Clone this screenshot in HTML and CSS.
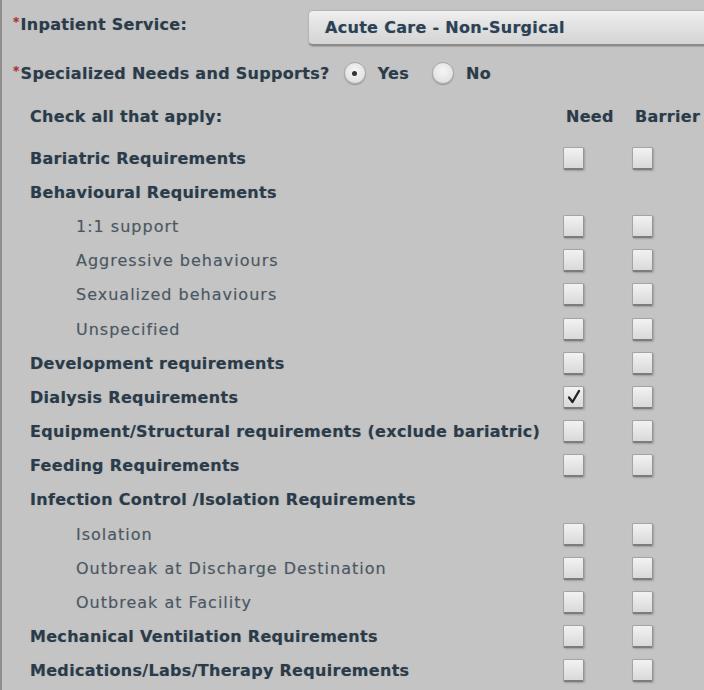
FILE: index.html
```html
<!DOCTYPE html>
<html>
<head>
<meta charset="utf-8">
<link rel="stylesheet" href="styles.css">
</head>
<body>
<div class="panel">
  <div class="field service">
    <div class="label"><span class="req">*</span>Inpatient Service:</div>
    <div class="select">Acute Care - Non-Surgical</div>
  </div>
  <div class="field needs">
    <div class="label"><span class="req">*</span>Specialized Needs and Supports?</div>
    <div class="radios">
      <span class="radio on"></span><span class="rlabel">Yes</span>
      <span class="radio"></span><span class="rlabel">No</span>
    </div>
  </div>
  <div class="grid">
    <div class="row head"><span class="name">Check all that apply:</span><span class="col">Need</span><span class="col">Barrier</span></div>
    <div class="row"><span class="name">Bariatric Requirements</span><span class="cell"><i class="cb"></i></span><span class="cell"><i class="cb"></i></span></div>
    <div class="row"><span class="name">Behavioural Requirements</span><span class="cell"></span><span class="cell"></span></div>
    <div class="row sub"><span class="name">1:1 support</span><span class="cell"><i class="cb"></i></span><span class="cell"><i class="cb"></i></span></div>
    <div class="row sub"><span class="name">Aggressive behaviours</span><span class="cell"><i class="cb"></i></span><span class="cell"><i class="cb"></i></span></div>
    <div class="row sub"><span class="name">Sexualized behaviours</span><span class="cell"><i class="cb"></i></span><span class="cell"><i class="cb"></i></span></div>
    <div class="row sub"><span class="name">Unspecified</span><span class="cell"><i class="cb"></i></span><span class="cell"><i class="cb"></i></span></div>
    <div class="row"><span class="name">Development requirements</span><span class="cell"><i class="cb"></i></span><span class="cell"><i class="cb"></i></span></div>
    <div class="row"><span class="name">Dialysis Requirements</span><span class="cell"><i class="cb checked"><svg viewBox="0 0 20 20" width="20" height="20"><path d="M5 10.5 L8.5 15 L15 4" fill="none" stroke="#222" stroke-width="2.3" stroke-linecap="round" stroke-linejoin="round"/></svg></i></span><span class="cell"><i class="cb"></i></span></div>
    <div class="row"><span class="name">Equipment/Structural requirements (exclude bariatric)</span><span class="cell"><i class="cb"></i></span><span class="cell"><i class="cb"></i></span></div>
    <div class="row"><span class="name">Feeding Requirements</span><span class="cell"><i class="cb"></i></span><span class="cell"><i class="cb"></i></span></div>
    <div class="row"><span class="name">Infection Control /Isolation Requirements</span><span class="cell"></span><span class="cell"></span></div>
    <div class="row sub"><span class="name">Isolation</span><span class="cell"><i class="cb"></i></span><span class="cell"><i class="cb"></i></span></div>
    <div class="row sub"><span class="name">Outbreak at Discharge Destination</span><span class="cell"><i class="cb"></i></span><span class="cell"><i class="cb"></i></span></div>
    <div class="row sub"><span class="name">Outbreak at Facility</span><span class="cell"><i class="cb"></i></span><span class="cell"><i class="cb"></i></span></div>
    <div class="row"><span class="name">Mechanical Ventilation Requirements</span><span class="cell"><i class="cb"></i></span><span class="cell"><i class="cb"></i></span></div>
    <div class="row"><span class="name">Medications/Labs/Therapy Requirements</span><span class="cell"><i class="cb"></i></span><span class="cell"><i class="cb"></i></span></div>
  </div>
</div>
</body>
</html>
```
FILE: styles.css
```css
html, body {
  margin: 0;
  padding: 0;
  background: #c4c4c4;
}
body {
  width: 704px;
  height: 690px;
  overflow: hidden;
  font-family: "DejaVu Sans", Verdana, sans-serif;
  font-size: 16px;
  letter-spacing: 0.3px;
  color: #2b3b4a;
  text-shadow: 0 0 1px rgba(43, 59, 74, 0.35);
}
.panel {
  border-left: 2px solid #8e8e8e;
  height: 690px;
  box-sizing: border-box;
  padding-top: 10px;
}
.field {
  display: flex;
  align-items: center;
  padding-left: 11px;
  font-weight: bold;
}
.req {
  color: #b8283a;
  font-size: 12px;
  vertical-align: 4px;
  margin-right: 1px;
}
.service {
  height: 35px;
}
.service .label {
  width: 295px;
  align-self: flex-start;
  padding-top: 5px;
}
.select {
  flex: 1;
  height: 36px;
  box-sizing: border-box;
  display: flex;
  align-items: center;
  padding-left: 16px;
  padding-top: 1px;
  color: #2b4256;
  border-radius: 5px 0 0 5px;
  background: linear-gradient(#f0f0f0 0%, #e6e6e6 30%, #d4d4d4 100%);
  border: 1px solid #b4b4b4;
  border-right: none;
  border-bottom: 2px solid #8a8a8a;
  box-shadow: 0 1px 1px rgba(0,0,0,0.15);
}
.needs {
  height: 40px;
  margin-top: 8px;
}
.needs .label {
  margin-right: 14px;
}
.radios {
  display: flex;
  align-items: center;
}
.radio {
  width: 22px;
  height: 22px;
  border-radius: 50%;
  box-sizing: border-box;
  border: 1px solid #a9a9a9;
  background: radial-gradient(circle at 50% 40%, #f6f6f6 0%, #e2e2e2 70%, #d0d0d0 100%);
  box-shadow: 0 1px 1px rgba(0,0,0,0.25);
  display: flex;
  align-items: center;
  justify-content: center;
}
.radio.on::after {
  content: "";
  width: 5px;
  height: 5px;
  border-radius: 50%;
  background: #333;
}
.rlabel {
  margin-left: 12px;
  margin-right: 23px;
}
.grid {
  padding-left: 28px;
  margin-top: 6px;
}
.row {
  display: grid;
  grid-template-columns: 532px 69px 73px;
  align-items: center;
  height: 34.2px;
  font-weight: bold;
  white-space: nowrap;
}
.row.head {
  height: 35px;
  margin-bottom: 7px;
}
.col {
  padding-left: 4px;
}
.row.sub .name {
  font-weight: normal;
  letter-spacing: 1px;
  padding-left: 46px;
  color: #4b5762;
  text-shadow: 0 0 1px rgba(75, 87, 98, 0.3);
}
.cell {
  display: flex;
  align-items: center;
  height: 100%;
}
.cb {
  display: block;
  width: 21px;
  height: 23px;
  box-sizing: border-box;
  border: 1px solid #a4a4a4;
  border-bottom: 2px solid #7c7c7c;
  border-right-color: #959595;
  border-radius: 2px;
  background: linear-gradient(#f2f2f2, #d9d9d9);
  box-shadow: 1px 1px 2px rgba(0,0,0,0.2);
  position: relative;
  margin-left: 1px;
}
.cb svg {
  position: absolute;
  left: 0;
  top: 0;
}
```
